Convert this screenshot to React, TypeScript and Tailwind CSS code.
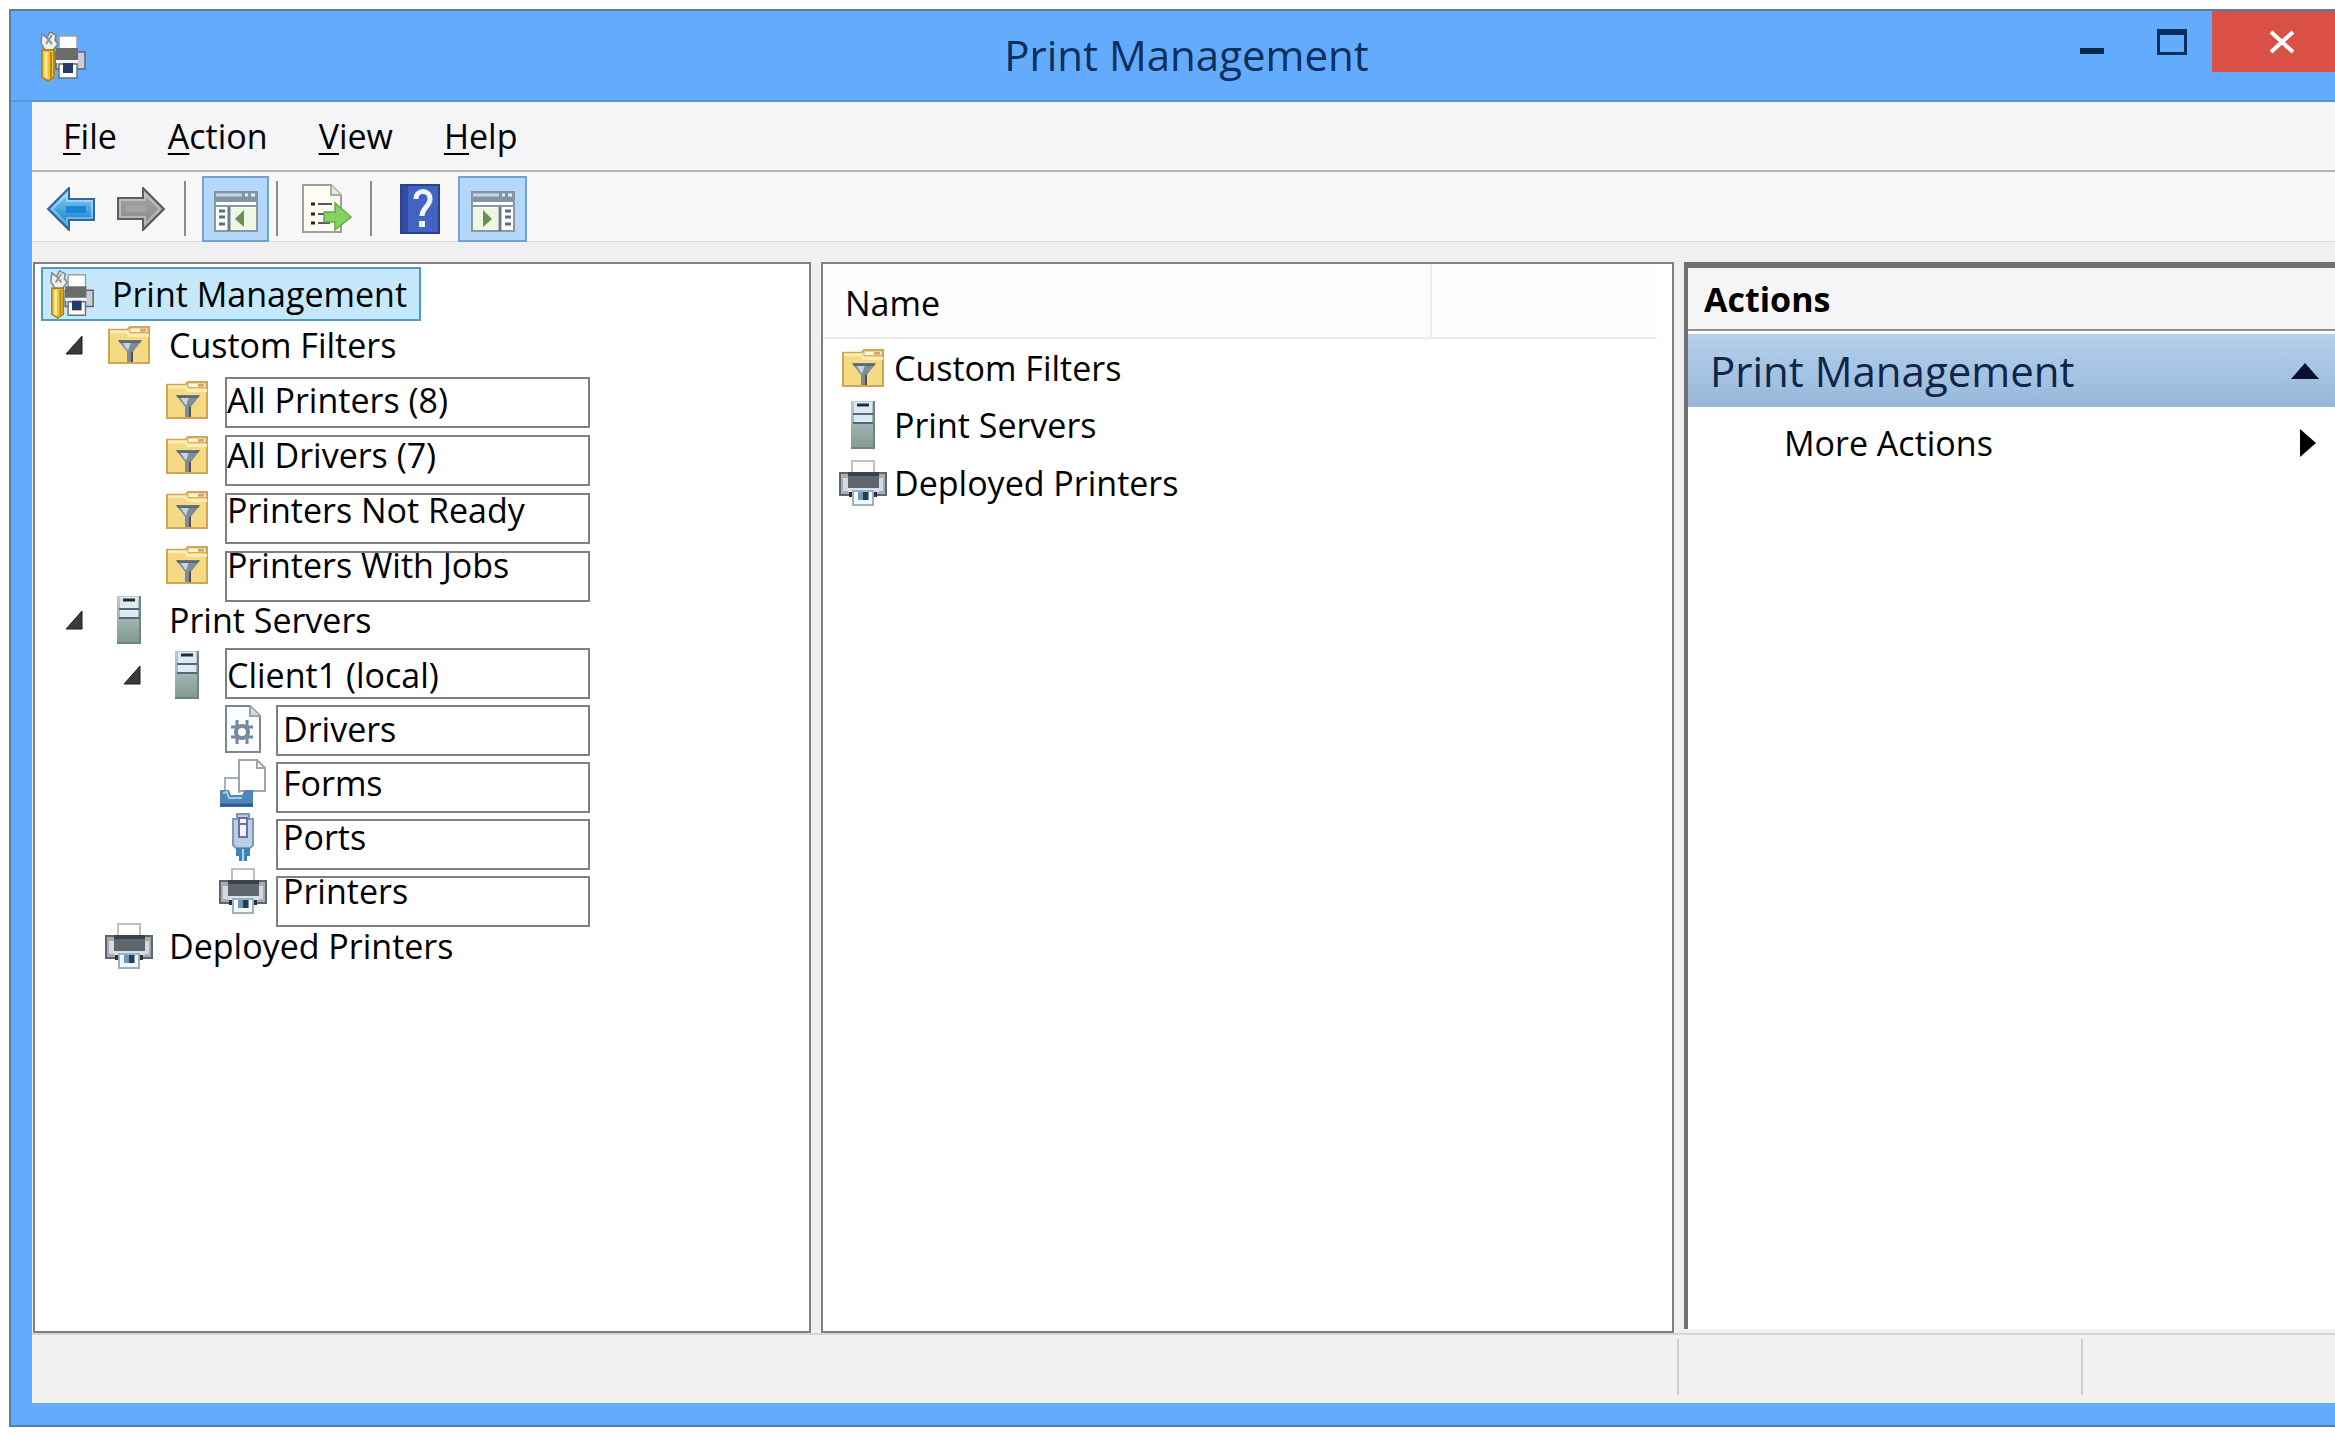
import React from "react";

interface IconProps {
  className?: string;
}

const PrintManagementIcon: React.FC<IconProps> = ({ className }) => (
  <svg viewBox="0 0 48 52" className={className} aria-hidden="true">
    <path d="M3 4l5 4 3-6 6 3-1 5 3 4-5 6H6L2 13z" fill="#eef0ee" stroke="#77828a" strokeWidth="1.5" />
    <path d="M8 8l5 6M13 5l-6 9" stroke="#8c979c" strokeWidth="2" />
    <path d="M3 20h12v27l-6 4-6-4z" fill="#f2c230" stroke="#a57c16" strokeWidth="1.5" />
    <path d="M7 22v26" stroke="#fbe99a" strokeWidth="3" />
    <path d="M12 22v26" stroke="#b5861b" strokeWidth="2" />
    <path d="M20 6h18v16H20z" fill="#fff" stroke="#9aa0a8" strokeWidth="1.5" />
    <path d="M17 22h29v17H17z" fill="#c9ccd8" stroke="#5d6470" strokeWidth="1.5" />
    <path d="M17 18h22v12H17z" fill="#6a6c6a" />
    <path d="M17 30h22v3H17z" fill="#f2f4f8" />
    <path d="M20 34h18v14H20z" fill="#fff" stroke="#69727c" strokeWidth="1.5" />
    <path d="M24 33h10v10H24z" fill="#253a66" />
  </svg>
);

const FilterFolderIcon: React.FC<IconProps> = ({ className }) => (
  <svg viewBox="0 0 43 40" preserveAspectRatio="none" className={className} aria-hidden="true">
    <path d="M1 4h18l3-3h19v38H1z" fill="#f5d983" stroke="#cfa655" strokeWidth="2" />
    <path d="M2 6h17l3 4h19" fill="none" stroke="#fbedb4" strokeWidth="3" />
    <path d="M22 2h18v5H22z" fill="#fff7dc" stroke="#d1a650" />
    <path d="M32 3h6v3h-6z" fill="#dc9f6a" />
    <path d="M10 15h24l-9 12v11h-6V27z" fill="#7d8b9b" />
    <path d="M14 17h9l-3 9z" fill="#c5d3df" />
    <path d="M10 15h24l-2 3H12z" fill="#5b6878" />
    <path d="M24 27v11" stroke="#56503c" strokeWidth="2" />
  </svg>
);

const ServerIcon: React.FC<IconProps> = ({ className }) => (
  <svg viewBox="0 0 24 48" className={className} aria-hidden="true">
    <defs>
      <linearGradient id="server" x1="0" y1="0" x2="0" y2="1">
        <stop offset="0" stopColor="#b9cbd6" />
        <stop offset="1" stopColor="#829a8b" />
      </linearGradient>
    </defs>
    <path d="M0 0h24v48H0z" fill="url(#server)" />
    <path d="M3 1h18v21H3z" fill="#dfe9f2" />
    <path d="M6 4h12" stroke="#222c33" strokeWidth="3" />
    <path d="M2 13h20M2 22h20" stroke="#52687a" strokeWidth="2" />
    <path d="M23 0v48M0 47h24" stroke="#6f8577" strokeWidth="2" />
  </svg>
);

const PrinterIcon: React.FC<IconProps> = ({ className }) => (
  <svg viewBox="0 0 48 46" className={className} aria-hidden="true">
    <path d="M13 1h22v14H13z" fill="#fff" stroke="#c3bccb" strokeWidth="2" />
    <path d="M1 13h46v22H1z" fill="#a9adb3" stroke="#5f656d" strokeWidth="2" />
    <path d="M4 18h5v13H4zM40 18h4v13h-4z" fill="#d5dadd" />
    <path d="M9 12h31v17H9z" fill="#60666d" />
    <path d="M9 12h31v4H9z" fill="#3c4249" />
    <path d="M9 28h31v4H9z" fill="#d6e0e8" />
    <path d="M10 32h28v5H10z" fill="#27313b" />
    <path d="M14 31h20v14H14z" fill="#f2f7fa" stroke="#9fb0bd" strokeWidth="2" />
    <path d="M19 32h11v8H19z" fill="#7397b3" />
    <path d="M24 32h5v8h-5z" fill="#223e58" />
  </svg>
);

const DriversIcon: React.FC<IconProps> = ({ className }) => (
  <svg viewBox="0 0 36 48" className={className} aria-hidden="true">
    <path d="M1 1h24l10 10v36H1z" fill="#fbfdff" stroke="#7d8791" strokeWidth="2" />
    <path d="M25 1v10h10" fill="#d5dbe0" stroke="#9aa5ad" strokeWidth="2" />
    <circle cx="17" cy="27" r="6" fill="none" stroke="#7488a0" strokeWidth="4" />
    <path d="M12 15v6M22 15v6M12 33v6M22 33v6M6 22h5M6 32h5M23 22h5M23 32h5" stroke="#7488a0" strokeWidth="3" />
  </svg>
);

const FormsIcon: React.FC<IconProps> = ({ className }) => (
  <svg viewBox="0 0 46 48" className={className} aria-hidden="true">
    <path d="M5 34V19h14v15" fill="#fff" stroke="#9eb0c6" strokeWidth="2" />
    <path d="M19 1h18l8 8v23H19z" fill="#fff" stroke="#a2a4ad" strokeWidth="2" />
    <path d="M37 1v8h8" fill="none" stroke="#a2a4ad" strokeWidth="2" />
    <path d="M0 31h9l2 5h11l3-5h8v17H0z" fill="#4f87b6" />
    <path d="M0 46h33" stroke="#2b5f90" strokeWidth="3" />
    <path d="M3 34l4-1 2 6h13" fill="none" stroke="#a4cbe6" strokeWidth="2" />
  </svg>
);

const PortsIcon: React.FC<IconProps> = ({ className }) => (
  <svg viewBox="0 0 22 48" className={className} aria-hidden="true">
    <path d="M5 1h12v5h4v26l-3 3H4l-3-3V6h4z" fill="#b7cfe6" stroke="#8098b4" strokeWidth="2" />
    <path d="M7 5h8v19H7z" fill="#f4f5fb" stroke="#6a6f9f" strokeWidth="2" />
    <path d="M7 11h8" stroke="#6a6f9f" strokeWidth="2" />
    <path d="M4 35h14v8h-3v5H7v-5H4z" fill="#3f83b5" />
    <path d="M11 36v12" stroke="#a9d5ee" strokeWidth="2" />
  </svg>
);

const ArrowIcon: React.FC<IconProps & { id: string; light: string; dark: string; edge: string }> = ({
  className,
  id,
  light,
  dark,
  edge,
}) => (
  <svg viewBox="0 0 50 44" className={className} aria-hidden="true">
    <defs>
      <linearGradient id={id} x1="0" y1="0" x2="0" y2="1">
        <stop offset="0.2" stopColor={light} />
        <stop offset="0.8" stopColor={dark} />
      </linearGradient>
    </defs>
    <path d="M2 22L23 1v11h25v21H23v10z" fill={`url(#${id})`} stroke={edge} strokeWidth="2" />
    <path d="M6 22L21 7v7h25v17H21v6z" fill="none" stroke="#fff" strokeOpacity="0.35" strokeWidth="2" />
    <path d="M20 19h20v7H20z" fill={dark} />
  </svg>
);

const PaneIcon: React.FC<IconProps & { side: "left" | "right" }> = ({ className, side }) => (
  <svg viewBox="0 0 44 42" className={className} aria-hidden="true">
    <path d="M0 1h44v40H0z" fill="#fdfefe" />
    <path d="M0 1h44v11H0z" fill="#8295a8" />
    <path d="M2 5h26" stroke="#c9d6e2" strokeWidth="3" />
    <path d="M31 5h3M37 5h4" stroke="#e8eef4" strokeWidth="3" />
    <path d="M1 10v31h42V10M0 16h44" fill="none" stroke="#8a98a4" strokeWidth="2" />
    {side === "left" ? (
      <>
        <path d="M15 17v24" stroke="#6d7a86" strokeWidth="3" />
        <path d="M5 21h6M5 27h6M5 34h6" stroke="#5d6c7a" strokeWidth="3" />
        <path d="M17 18h25v22H17z" fill="#eef7e3" />
        <path d="M30 20v17l-9-8z" fill="#6b8f50" />
      </>
    ) : (
      <>
        <path d="M29 17v24" stroke="#6d7a86" strokeWidth="3" />
        <path d="M34 21h6M34 27h6M34 34h6" stroke="#5d6c7a" strokeWidth="3" />
        <path d="M2 18h25v22H2z" fill="#eef7e3" />
        <path d="M12 20v17l9-8z" fill="#6b8f50" />
      </>
    )}
  </svg>
);

const ExportIcon: React.FC<IconProps> = ({ className }) => (
  <svg viewBox="0 0 50 50" className={className} aria-hidden="true">
    <path d="M1 1h28l10 10v37H1z" fill="#fffdf3" stroke="#a59f97" strokeWidth="2" />
    <path d="M29 1v10h10" fill="#e7e7e7" stroke="#b0aaa5" strokeWidth="2" />
    <path d="M9 20h4M9 30h4M9 39h4" stroke="#222" strokeWidth="3" />
    <path d="M16 20h14M16 30h8M16 39h12" stroke="#5b5575" strokeWidth="2" />
    <path d="M22 28h11v-9l16 14-16 13v-8H22z" fill="#86d162" stroke="#62ab48" strokeWidth="1.5" />
  </svg>
);

const HelpIcon: React.FC<IconProps> = ({ className }) => (
  <svg viewBox="0 0 40 50" className={className} aria-hidden="true">
    <path d="M1 1h38v48H1z" fill="#4163c2" stroke="#2c4288" strokeWidth="2" />
    <path d="M5 2v46" stroke="#2f4ba3" strokeWidth="6" />
    <path d="M16 15c0-10 14-10 14 0 0 7-8 9-8 17" fill="none" stroke="#f1f5fd" strokeWidth="5" />
    <path d="M19 37h6v6h-6z" fill="#f1f5fd" />
  </svg>
);

const menus = ["File", "Action", "View", "Help"];

interface TreeItem {
  label: string;
  row: string;
  icon: React.ReactNode;
  expanded?: boolean;
}

const level1 = "h-[55px] pl-6";
const level2 = "h-[55px] pl-[82px]";
const level3 = "h-[54px] pl-[138px]";

const folder = <FilterFolderIcon className="h-[38px] w-[43px]" />;
const server = <ServerIcon className="h-12 w-6" />;
const printer = <PrinterIcon className="h-[46px] w-12" />;

const treeItems: TreeItem[] = [
  { label: "Custom Filters", row: level1, icon: folder, expanded: true },
  { label: "All Printers (8)", row: level2, icon: folder },
  { label: "All Drivers (7)", row: level2, icon: folder },
  { label: "Printers Not Ready", row: level2, icon: folder },
  { label: "Printers With Jobs", row: level2, icon: folder },
  { label: "Print Servers", row: level1, icon: server, expanded: true },
  { label: "Client1 (local)", row: level2, icon: server, expanded: true },
  { label: "Drivers", row: level3, icon: <DriversIcon className="h-12 w-9" /> },
  { label: "Forms", row: level3, icon: <FormsIcon className="h-12 w-[46px]" /> },
  { label: "Ports", row: level3, icon: <PortsIcon className="h-12 w-[22px]" /> },
  { label: "Printers", row: level3, icon: printer },
  { label: "Deployed Printers", row: level1, icon: printer },
];

const listItems = [
  { label: "Custom Filters", icon: folder },
  { label: "Print Servers", icon: server },
  { label: "Deployed Printers", icon: printer },
];

const TitleBar = () => (
  <header className="flex h-[91px] items-start border-b-2 border-[#5f93cf]">
    <PrintManagementIcon className="ml-7 mt-[19px] h-[52px] w-12" />
    <h1 className="flex-1 pl-[234px] pt-4 text-center text-[42px] leading-[56px] text-[#0d2f5c]">
      Print Management
    </h1>
    <button aria-label="Minimize" className="flex h-[61px] w-20 items-center justify-center">
      <svg viewBox="0 0 24 26" className="h-[26px] w-6">
        <path d="M0 19h24v6H0z" fill="#0b2746" />
      </svg>
    </button>
    <button aria-label="Maximize" className="flex h-[61px] w-20 items-center justify-center">
      <svg viewBox="0 0 30 26" className="h-[26px] w-[30px]">
        <path d="M1.5 2v22.500h27V2" fill="none" stroke="#0b2d5c" strokeWidth="3" />
        <path d="M0 0h30v6H0z" fill="#0b2d5c" />
      </svg>
    </button>
    <button aria-label="Close" className="flex h-[61px] w-[123px] items-center justify-center bg-[#da5046] pl-4">
      <svg viewBox="0 0 26 24" className="h-6 w-[26px]">
        <path d="M2 2l22 20M24 2L2 22" stroke="#fff" strokeWidth="4" />
      </svg>
    </button>
  </header>
);

const MenuBar = () => (
  <nav className="flex h-[70px] items-center gap-[51px] border-b-2 border-[#b3b3b3] bg-[#f5f5f7] pl-[31px]">
    {menus.map((menu) => (
      <button key={menu} className="text-[34px] leading-[46px]">
        <span className="underline decoration-2 underline-offset-4">{menu[0]}</span>
        {menu.slice(1)}
      </button>
    ))}
  </nav>
);

const Divider = () => <div className="h-[55px] w-[2px] bg-[#8c8c8c]" />;

const Toolbar = () => (
  <div className="flex h-[70px] items-center border-b border-[#dcdcdc] bg-[#f7f7f8] pl-[14px] pt-1">
    <button aria-label="Back">
      <ArrowIcon id="back" light="#7cc6f0" dark="#1a86d0" edge="#33699a" className="h-11 w-[50px]" />
    </button>
    <button aria-label="Forward" className="ml-5">
      <ArrowIcon id="forward" light="#8c8c8c" dark="#a2a2a2" edge="#5e5e5e" className="h-11 w-[50px] rotate-180" />
    </button>
    <div className="ml-[18px]">
      <Divider />
    </div>
    <button
      aria-label="Show or hide console tree"
      className="ml-4 flex h-[66px] w-[67px] items-end justify-center border-2 border-[#6fa3d3] bg-[#b5d7fa] pb-2"
    >
      <PaneIcon side="left" className="h-[42px] w-11" />
    </button>
    <div className="ml-[7px]">
      <Divider />
    </div>
    <button aria-label="Export list" className="ml-6">
      <ExportIcon className="size-[50px]" />
    </button>
    <div className="ml-[18px]">
      <Divider />
    </div>
    <button aria-label="Help" className="ml-7">
      <HelpIcon className="h-[50px] w-10" />
    </button>
    <button
      aria-label="Show or hide action pane"
      className="ml-[18px] flex h-[66px] w-[69px] items-end justify-center border-2 border-[#6fa3d3] bg-[#b5d7fa] pb-2"
    >
      <PaneIcon side="right" className="h-[42px] w-11" />
    </button>
  </div>
);

const ConsoleTree = () => (
  <section className="relative w-[778px] shrink-0 border-2 border-[#808080] bg-white pl-[6px] pt-[3px]">
    <button className="flex h-[54px] items-center border-2 border-[#4a9dc0] bg-[#c5e9fa] pl-[5px] pr-3">
      <PrintManagementIcon className="h-[50px] w-12" />
      <span className="ml-4 text-[34px] leading-[46px]">Print Management</span>
    </button>
    <ul className="-mt-1">
      {treeItems.map((item) => (
        <li key={item.label} className={`flex items-center ${item.row}`}>
          <span className="flex w-[18px] shrink-0 items-center">
            {item.expanded && (
              <svg viewBox="0 0 18 20" className="h-5 w-[18px]">
                <path d="M17 1v18H1z" fill="#3a3a3a" stroke="#1f1f1f" />
              </svg>
            )}
          </span>
          <span className="ml-[22px] flex w-12 shrink-0 items-center justify-center">{item.icon}</span>
          <span className="ml-4 text-[34px] leading-[46px]">{item.label}</span>
        </li>
      ))}
    </ul>
    {/* callout frames drawn over the tree */}
    <div className="pointer-events-none absolute left-[190px] top-[113px] flex w-[365px] flex-col gap-[7px]">
      <div className="h-[51px] border-2 border-[#808080]" />
      <div className="h-[51px] border-2 border-[#808080]" />
      <div className="h-[51px] border-2 border-[#808080]" />
      <div className="h-[51px] border-2 border-[#808080]" />
    </div>
    <div className="pointer-events-none absolute left-[190px] top-96 flex w-[365px] flex-col items-end gap-[6px]">
      <div className="h-[51px] w-full border-2 border-[#808080]" />
      <div className="h-[51px] w-[314px] border-2 border-[#808080]" />
      <div className="h-[51px] w-[314px] border-2 border-[#808080]" />
      <div className="h-[51px] w-[314px] border-2 border-[#808080]" />
      <div className="h-[51px] w-[314px] border-2 border-[#808080]" />
    </div>
  </section>
);

const ResultList = () => (
  <section className="min-w-0 flex-1 border-2 border-[#808080] bg-white">
    <table className="w-[834px] table-fixed text-left text-[34px] leading-[46px]">
      <thead>
        <tr className="h-[74px] border-b-2 border-[#ececec] bg-[#fdfdfd]">
          <th className="w-[608px] border-r-2 border-[#ececec] pl-[22px] pt-1 font-normal">Name</th>
          <th aria-label="Empty column" />
        </tr>
      </thead>
      <tbody>
        {listItems.map((item) => (
          <tr key={item.label} className="h-[58px]">
            <td colSpan={2} className="p-0">
              <div className="flex items-center pl-4">
                <span className="flex w-12 justify-center">{item.icon}</span>
                <span className="ml-[7px]">{item.label}</span>
              </div>
            </td>
          </tr>
        ))}
      </tbody>
    </table>
  </section>
);

const ActionsPane = () => (
  <aside className="mb-1 w-[651px] shrink-0 border-l-4 border-t-[6px] border-[#707070] bg-white">
    <h2 className="h-[63px] border-b-2 border-[#8f8f8f] bg-[#f5f5f6] pl-4 pt-2 text-[34px] font-bold leading-[46px]">
      Actions
    </h2>
    <button className="mt-[3px] flex h-[73px] w-full items-center justify-between bg-linear-to-b from-[#b3d1ec] to-[#98b6d9] pl-[22px] pr-4 text-[42px] leading-[56px] text-[#10254a]">
      Print Management
      <svg viewBox="0 0 28 16" className="h-4 w-7">
        <path d="M14 0l14 16H0z" fill="#0a1030" />
      </svg>
    </button>
    <button className="flex h-[72px] w-full items-center justify-between pl-24 pr-[19px] text-[34px] leading-[46px]">
      More Actions
      <svg viewBox="0 0 16 28" className="h-7 w-4">
        <path d="M0 0l16 14L0 28z" fill="#000" />
      </svg>
    </button>
  </aside>
);

const StatusBar = () => (
  <footer className="flex h-[70px] border-t-2 border-[#d6d6d6] bg-[#f1f1f2] pb-2 pt-1">
    <div className="flex-1" />
    <div className="w-[404px] border-l-2 border-[#d0d0d0]" />
    <div className="w-[254px] border-l-2 border-[#d0d0d0]" />
  </footer>
);

export default function App() {
  return (
    <div className="flex min-h-screen flex-col bg-white pb-3 pl-[9px] pt-[9px] font-['Open_Sans',sans-serif] text-black">
      <div className="flex flex-1 flex-col border-y-2 border-l-2 border-[#5380a8] bg-[#63abfc]">
        <TitleBar />
        <main className="mb-[22px] ml-[21px] flex flex-1 flex-col bg-[#f0f0f0]">
          <MenuBar />
          <Toolbar />
          <div className="flex flex-1 gap-[10px] pl-px pt-5">
            <ConsoleTree />
            <ResultList />
            <ActionsPane />
          </div>
          <StatusBar />
        </main>
      </div>
    </div>
  );
}
